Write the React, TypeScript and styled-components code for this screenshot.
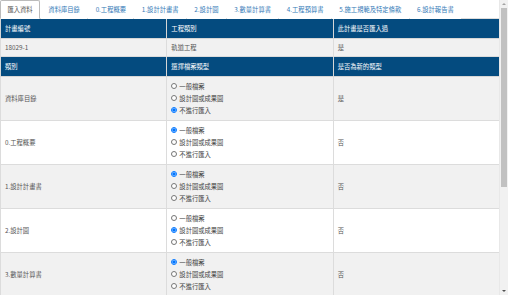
import styled, { createGlobalStyle } from "styled-components";

const GlobalStyle = createGlobalStyle`
  body {
    margin: 0;
    font-family: "Noto Sans CJK TC", "Liberation Sans", sans-serif;
    color: #444;
    background: #fff;
  }
`;

const Frame = styled.div`
  display: flex;
  height: 100vh;
  overflow: hidden;
`;

const Main = styled.div`
  width: 500px;
  overflow-y: auto;
  scrollbar-width: none;
`;

const ScrollBar = styled.div`
  display: flex;
  flex-direction: column;
  align-items: center;
  width: 8px;
  background: #f1f1f1;
  border-left: 1px solid #e8e8e8;
`;

const Arrow = styled.div<{ $down?: boolean }>`
  height: 8px;
  display: flex;
  align-items: center;
  justify-content: center;
  &::after {
    content: "";
    border-left: 2px solid transparent;
    border-right: 2px solid transparent;
    ${(p) =>
      p.$down ? "border-top: 2px solid #505050;" : "border-bottom: 2px solid #a3a3a3;"}
  }
`;

const Track = styled.div`
  flex: 1;
  width: 100%;
  display: flex;
  justify-content: center;
`;

const Thumb = styled.div`
  width: 6px;
  height: 179px;
  background: #c1c1c1;
`;

const Tabs = styled.ul`
  display: flex;
  margin: 0;
  padding: 0;
  list-style: none;
  border-bottom: 1px solid #ddd;
`;

const Tab = styled.li<{ $active?: boolean }>`
  margin-right: 1px;
  margin-bottom: -1px;
  padding: 4px 6.4px;
  font-size: 6.3px;
  line-height: 9px;
  white-space: nowrap;
  border: 1px solid ${(p) => (p.$active ? "#bbb" : "transparent")};
  border-bottom-color: ${(p) => (p.$active ? "#fff" : "transparent")};
  border-radius: 2px 2px 0 0;
  color: ${(p) => (p.$active ? "#555" : "#337ab7")};
  background: #fff;
  cursor: pointer;
`;

const Table = styled.table`
  width: 500px;
  border-collapse: collapse;
  table-layout: fixed;
  font-size: 6.3px;
`;

const Head = styled.th`
  padding: 5px 4px;
  line-height: 9px;
  text-align: left;
  font-weight: normal;
  color: #fff;
  background: #044b7f;
  border: 1px solid #d6d6d6;
  border-top: 0;
`;

const Row = styled.tr<{ $striped?: boolean }>`
  background: ${(p) => (p.$striped ? "#f1f1f1" : "#fff")};
`;

const Cell = styled.td`
  padding: 4px;
  line-height: 9px;
  vertical-align: middle;
  border: 1px solid #dcdcdc;
  color: #555;
`;

const ChoiceCell = styled(Cell)`
  padding: 3px 4px 4px;
`;

const Choice = styled.label`
  display: flex;
  align-items: center;
  gap: 2.5px;
  height: 12px;
  color: #444;
`;

const Radio = styled.input`
  width: 5.5px;
  height: 5.5px;
  margin: 0;
`;

const tabs = [
  "匯入資料",
  "資料庫目錄",
  "0.工程概要",
  "1.設計計畫書",
  "2.設計圖",
  "3.數量計算書",
  "4.工程預算書",
  "5.施工規範及特定條款",
  "6.設計報告書",
];

const options = ["一般檔案", "設計圖或成果圖", "不進行匯入"];

const categories = [
  { name: "資料庫目錄", pick: 2, isNew: "是" },
  { name: "0.工程概要", pick: 0, isNew: "否" },
  { name: "1.設計計畫書", pick: 0, isNew: "否" },
  { name: "2.設計圖", pick: 1, isNew: "否" },
  { name: "3.數量計算書", pick: 0, isNew: "否" },
  { name: "4.工程預算書", pick: 0, isNew: "否" },
  { name: "5.施工規範及特定條款", pick: 0, isNew: "否" },
  { name: "6.設計報告書", pick: 0, isNew: "否" },
];

const App = () => {
  return (
    <Frame>
      <GlobalStyle />
      <Main>
        <Tabs>
          {tabs.map((t, i) => (
            <Tab key={t} $active={i === 0}>
              {t}
            </Tab>
          ))}
        </Tabs>
        <Table>
          <thead>
            <tr>
              <Head>計畫編號</Head>
              <Head>工程類別</Head>
              <Head>此計畫是否匯入過</Head>
            </tr>
          </thead>
          <tbody>
            <Row $striped>
              <Cell>18029-1</Cell>
              <Cell>軌道工程</Cell>
              <Cell>是</Cell>
            </Row>
            <tr>
              <Head>類別</Head>
              <Head>選擇檔案類型</Head>
              <Head>是否為新的類型</Head>
            </tr>
            {categories.map((c, i) => (
              <Row key={c.name} $striped={i % 2 === 0}>
                <Cell>{c.name}</Cell>
                <ChoiceCell>
                  {options.map((o, j) => (
                    <Choice key={o}>
                      <Radio
                        type="radio"
                        name={c.name}
                        defaultChecked={j === c.pick}
                      />
                      {o}
                    </Choice>
                  ))}
                </ChoiceCell>
                <Cell>{c.isNew}</Cell>
              </Row>
            ))}
          </tbody>
        </Table>
      </Main>
      <ScrollBar>
        <Arrow />
        <Track>
          <Thumb />
        </Track>
        <Arrow $down />
      </ScrollBar>
    </Frame>
  );
};

export default App;
